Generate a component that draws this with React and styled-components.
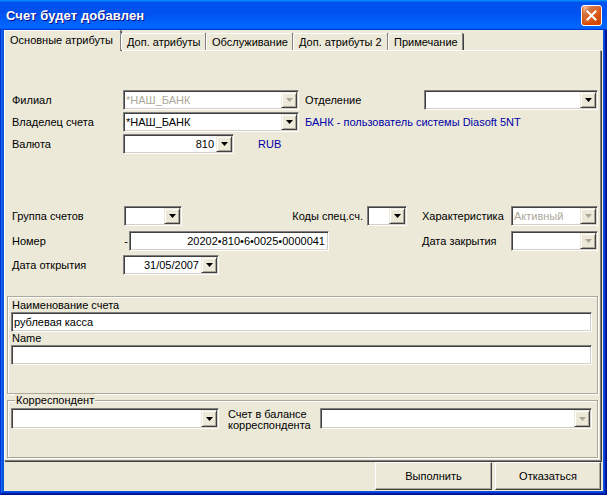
import React from "react";
import styled, { createGlobalStyle } from "styled-components";

const GlobalStyle = createGlobalStyle`
  html, body {
    margin: 0;
    padding: 0;
    background: #ffffff;
  }
  body {
    font-family: "Liberation Sans", Arial, sans-serif;
    font-size: 11px;
    color: #000;
  }
  * {
    box-sizing: border-box;
  }
`

const face = "#ECE9D8"

const Window = styled.div`
  width: 607px;
  height: 495px;
  display: flex;
  flex-direction: column;
  overflow: hidden;
  background: #0855DD;
  box-shadow: inset -1px -1px #00138c, inset 1px 1px #0831d9, inset -2px -2px #001ea0,
    inset 2px 2px #166aee, inset -3px -3px #003bda, inset 3px 3px #0855dd;
`
const TitleBar = styled.div`
  flex: none;
  height: 30px;
  display: flex;
  align-items: center;
  justify-content: space-between;
  padding: 0 5px 0 6px;
  background: linear-gradient(180deg, #0997ff 0%, #0053ee 8%, #0050ee 40%, #0066ff 88%,
    #0066ff 93%, #005bff 95%, #003dd7 96%, #003dd7 100%);
`
const Title = styled.span`
  color: #fff;
  font-family: "Liberation Sans", Arial, sans-serif;
  font-weight: bold;
  font-size: 13px;
  letter-spacing: 0.1px;
  text-shadow: 1px 1px #0f1089;
`
const CloseButton = styled.div`
  width: 21px;
  height: 21px;
  display: flex;
  align-items: center;
  justify-content: center;
  border: 1px solid #fff;
  border-radius: 3px;
  background: radial-gradient(circle at 90% 90%, #cc4600 0%, #dc6527 55%, #cd7546 70%, #ffccb2 90%, #fff 100%);
  box-shadow: inset 0 -1px 2px 1px #da4600;
`
const Client = styled.div`
  flex: 1;
  display: flex;
  flex-direction: column;
  margin: 0 4px 4px 4px;
  background: ${face};
`
const TabStrip = styled.div`
  flex: none;
  height: 20px;
  display: flex;
  align-items: flex-end;
  position: relative;
  z-index: 1;
`
const Tab = styled.div`
  flex: none;
  width: ${p => p.$w}px;
  height: ${p => (p.$active ? 21 : 17)}px;
  margin-bottom: ${p => (p.$active ? -1 : 0)}px;
  padding: ${p => (p.$active ? "3px 0 0 5px" : "2px 0 0 5px")};
  background: ${face};
  border-top: 1px solid #fff;
  border-left: 1px solid #fff;
  border-right: 1px solid #808080;
  box-shadow: 1px 0 #404040;
  border-radius: 2px 2px 0 0;
  white-space: nowrap;
`
const Panel = styled.div`
  height: 411px;
  flex: none;
  display: flex;
  flex-direction: column;
  margin-right: 2px;
  padding-left: 1px;
  border-top: 1px solid #fff;
  border-left: 1px solid #fff;
  border-right: 1px solid #808080;
  border-bottom: 1px solid #808080;
  box-shadow: 1px 1px #404040;
`
const Row = styled.div`
  display: flex;
  align-items: center;
  height: 20px;
  margin-top: ${p => p.$top}px;
  padding-left: 6px;
`
const Label = styled.div`
  flex: none;
  width: ${p => p.$w}px;
  margin-left: ${p => p.$ml || 0}px;
  text-align: ${p => p.$align || "left"};
  white-space: nowrap;
`
const Note = styled.div`
  flex: none;
  margin-left: ${p => p.$ml || 0}px;
  color: #0000a8;
  white-space: nowrap;
`
const Field = styled.div`
  flex: none;
  width: ${p => p.$w}px;
  height: ${p => p.$h || 20}px;
  margin-left: ${p => p.$ml || 0}px;
  display: flex;
  align-items: center;
  padding: 1px;
  background: #fff;
  border-top: 1px solid #808080;
  border-left: 1px solid #808080;
  border-right: 1px solid #fff;
  border-bottom: 1px solid #fff;
  box-shadow: inset 1px 1px #404040, inset -1px -1px #d4d0c8;
`
const Value = styled.span`
  flex: 1;
  min-width: 0;
  overflow: hidden;
  white-space: nowrap;
  padding: 0 ${p => (p.$right ? 2 : 0)}px 0 ${p => (p.$right ? 0 : 1)}px;
  text-align: ${p => (p.$right ? "right" : "left")};
  color: ${p => (p.$disabled ? "#aca899" : "#000")};
`
const DropButton = styled.div`
  flex: none;
  width: 16px;
  height: 100%;
  display: flex;
  align-items: center;
  justify-content: center;
  background: ${face};
  border-top: 1px solid ${face};
  border-left: 1px solid ${face};
  border-right: 1px solid #404040;
  border-bottom: 1px solid #404040;
  box-shadow: inset 1px 1px #fff, inset -1px -1px #aca899;
`
const Dash = styled.div`
  flex: none;
  width: 6px;
  text-align: center;
`
const Box = styled.div`
  flex: none;
  width: 591px;
  height: 98px;
  margin: 21px 0 0 1px;
  padding: 2px 0 0 3px;
  display: flex;
  flex-direction: column;
  border: 1px solid #aca899;
  box-shadow: inset 1px 1px #fff, 1px 1px #fff;
`
const BoxLabel = styled.div`
  height: 13px;
  line-height: 13px;
  padding-left: 1px;
`
const Group = styled.fieldset`
  flex: none;
  width: 591px;
  height: 64px;
  margin: 0 0 0 1px;
  padding: 2px 0 0 3px;
  display: flex;
  align-items: flex-start;
  border: 1px solid #aca899;
  box-shadow: inset 1px 1px #fff, 1px 1px #fff;
`
const Legend = styled.legend`
  margin-left: 4px;
  padding: 0 1px;
  line-height: 12px;
  background: ${face};
`
const TwoLine = styled.div`
  flex: none;
  width: ${p => p.$w}px;
  margin-left: ${p => p.$ml}px;
  margin-top: 1px;
  line-height: 11px;
`
const ButtonBar = styled.div`
  flex: 1;
  display: flex;
  justify-content: flex-end;
  align-items: center;
  gap: 3px;
  padding-right: 2px;
`
const Button = styled.div`
  width: ${p => p.$w}px;
  height: 28px;
  display: flex;
  align-items: center;
  justify-content: center;
  background: ${face};
  border-top: 1px solid #fff;
  border-left: 1px solid #fff;
  border-right: 1px solid #404040;
  border-bottom: 1px solid #404040;
  box-shadow: inset -1px -1px #aca899;
`

const Arrow = ({ disabled }) => (
    <svg width="7" height="4" viewBox="0 0 7 4">
        <polygon points="0,0 7,0 3.5,4" fill={disabled ? "#aca899" : "#000"}/>
    </svg>
)

const Combo = ({ w, h, ml, value, right, disabled }) => (
    <Field $w={w} $h={h} $ml={ml}>
        <Value $right={right} $disabled={disabled}>{value}</Value>
        <DropButton><Arrow disabled={disabled}/></DropButton>
    </Field>
)

const tabs = [
    ["Основные атрибуты", 117],
    ["Доп. атрибуты", 85],
    ["Обслуживание", 87],
    ["Доп. атрибуты 2", 95],
    ["Примечание", 75],
]

export default function App() {
    return (
        <>
            <GlobalStyle/>
            <Window>
                <TitleBar>
                    <Title>Счет будет добавлен</Title>
                    <CloseButton>
                        <svg width="11" height="11" viewBox="0 0 11 11">
                            <path d="M1.5 1.5 L9.5 9.5 M9.5 1.5 L1.5 9.5" stroke="#fff" strokeWidth="2"
                                  strokeLinecap="square"/>
                        </svg>
                    </CloseButton>
                </TitleBar>
                <Client>
                    <TabStrip>
                        {tabs.map(([name, w], i) => (
                            <Tab key={name} $w={w} $active={i === 0}>{name}</Tab>
                        ))}
                    </TabStrip>
                    <Panel>
                        <Row $top={39}>
                            <Label $w={111}>Филиал</Label>
                            <Combo w={176} value="*НАШ_БАНК" disabled/>
                            <Label $w={119} $ml={6}>Отделение</Label>
                            <Combo w={174} value=""/>
                        </Row>
                        <Row $top={2}>
                            <Label $w={111}>Владелец счета</Label>
                            <Combo w={176} value="*НАШ_БАНК"/>
                            <Note $ml={6}>БАНК - пользователь системы Diasoft 5NT</Note>
                        </Row>
                        <Row $top={2}>
                            <Label $w={111}>Валюта</Label>
                            <Combo w={111} value="810" right/>
                            <Note $ml={24}>RUB</Note>
                        </Row>

                        <Row $top={52}>
                            <Label $w={112}>Группа счетов</Label>
                            <Combo w={58} value=""/>
                            <Label $w={181} $align="right">Коды спец.сч.</Label>
                            <Combo w={40} ml={4} value=""/>
                            <Label $w={89} $ml={15}>Характеристика</Label>
                            <Combo w={87} value="Активный" disabled/>
                        </Row>
                        <Row $top={5}>
                            <Label $w={111}>Номер</Label>
                            <Dash>-</Dash>
                            <Field $w={200}>
                                <Value $right>20202•810•6•0025•0000041</Value>
                            </Field>
                            <Label $w={89} $ml={93}>Дата закрытия</Label>
                            <Combo w={87} value="" disabled/>
                        </Row>
                        <Row $top={4}>
                            <Label $w={111}>Дата открытия</Label>
                            <Combo w={96} value="31/05/2007" right/>
                        </Row>

                        <Box>
                            <BoxLabel>Наименование счета</BoxLabel>
                            <Field $w={581}>
                                <Value>рублевая касса</Value>
                            </Field>
                            <BoxLabel>Name</BoxLabel>
                            <Field $w={581}>
                                <Value/>
                            </Field>
                        </Box>

                        <Group>
                            <Legend>Корреспондент</Legend>
                            <Combo w={208} h={21} value=""/>
                            <TwoLine $w={92} $ml={9}>Счет в балансе<br/>корреспондента</TwoLine>
                            <Combo w={272} h={21} value="" disabled/>
                        </Group>
                    </Panel>
                    <ButtonBar>
                        <Button $w={117}>Выполнить</Button>
                        <Button $w={106}>Отказаться</Button>
                    </ButtonBar>
                </Client>
            </Window>
        </>
    )
}
